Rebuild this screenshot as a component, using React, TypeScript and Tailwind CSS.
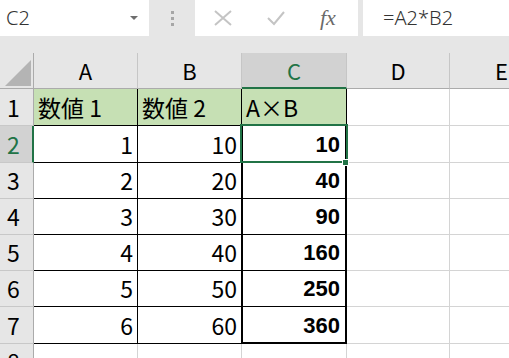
import React from "react";

const cols = [
  { key: "A", w: "w-[104px]" },
  { key: "B", w: "w-[104px]" },
  { key: "C", w: "w-[105px]" },
  { key: "D", w: "w-[103px]" },
  { key: "E", w: "w-[104px]" },
];

const rows = [
  { n: 1, h: "h-[37px]", a: "数値 1", b: "数値 2", c: "A×B" },
  { n: 2, h: "h-[37px]", a: "1", b: "10", c: "10" },
  { n: 3, h: "h-[36px]", a: "2", b: "20", c: "40" },
  { n: 4, h: "h-[36px]", a: "3", b: "30", c: "90" },
  { n: 5, h: "h-[36px]", a: "4", b: "40", c: "160" },
  { n: 6, h: "h-[36px]", a: "5", b: "50", c: "250" },
  { n: 7, h: "h-[37px]", a: "6", b: "60", c: "360" },
  { n: 8, h: "h-[36px]" },
];

const FormulaBar = () => (
  <div className="flex h-[36px]">
    <div className="w-[149px] bg-white flex items-center pl-[6px] pr-[11px]">
      <span className="font-['Noto_Sans',sans-serif] font-light text-[20px] text-[#333] leading-none">C2</span>
      <span className="ml-auto w-0 h-0 border-l-[4px] border-r-[4px] border-t-[4px] border-l-transparent border-r-transparent border-t-[#6e6e6e]" />
    </div>
    <div className="w-[46px] flex flex-col items-center justify-center gap-[3px]">
      <span className="w-[3px] h-[3px] bg-[#a6a6a6]" />
      <span className="w-[3px] h-[3px] bg-[#a6a6a6]" />
      <span className="w-[3px] h-[3px] bg-[#a6a6a6]" />
    </div>
    <div className="w-[163px] bg-white flex items-center">
      <svg className="ml-[17px]" width="22" height="16" viewBox="0 0 22 16">
        <path d="M3 1 L19 15 M19 1 L3 15" stroke="#c4c4c4" strokeWidth="2" fill="none" />
      </svg>
      <svg className="ml-[32px]" width="20" height="16" viewBox="0 0 20 16">
        <path d="M2 8 L8 14 L18 2" stroke="#c4c4c4" strokeWidth="2" fill="none" />
      </svg>
      <span className="ml-[34px] font-['Liberation_Serif',serif] italic text-[22px] text-[#6a6a6a] leading-none">fx</span>
    </div>
    <div className="w-[5px]" />
    <div className="flex-1 bg-white flex items-center pl-[20px]">
      <span className="font-['Noto_Sans',sans-serif] font-light text-[20px] text-[#333] leading-none">=A2*B2</span>
    </div>
  </div>
);

const HeaderRow = () => (
  <div className="flex h-[36px]">
    <div className="w-[34px] shrink-0 border-r border-b border-r-[#ababab] border-b-[#ababab] flex items-center justify-center">
      <svg width="30" height="30" viewBox="0 0 30 30">
        <polygon points="3,30 29,4 29,30" fill="#b4b4b4" />
      </svg>
    </div>
    {cols.map((c) =>
      c.key === "C" ? (
        <div
          key={c.key}
          className={`${c.w} shrink-0 bg-[#d2d2d2] border-r border-r-[#c6c6c6] border-b-2 border-b-[#217346] flex items-center justify-center text-[22px] text-[#217346]`}
        >
          {c.key}
        </div>
      ) : (
        <div
          key={c.key}
          className={`${c.w} shrink-0 border-r border-b border-r-[#c6c6c6] border-b-[#ababab] flex items-center justify-center text-[22px] text-black`}
        >
          {c.key}
        </div>
      )
    )}
  </div>
);

export default function App() {
  return (
    <div className="w-[509px] h-[358px] overflow-hidden bg-[#e6e6e6] font-['Noto_Sans_CJK_JP',sans-serif]">
      <FormulaBar />
      <div className="h-[17px]" />
      <HeaderRow />
      <div className="relative">
        {rows.map((r) => {
          const inTable = r.n <= 7;
          const head = r.n === 1;
          const border = inTable ? "border-r border-b border-black" : "border-r border-b border-[#d4d4d4]";
          return (
            <div key={r.n} className={`flex ${r.h}`}>
              <div
                className={
                  r.n === 2
                    ? "w-[34px] shrink-0 bg-[#d2d2d2] border-r-2 border-b border-r-[#217346] border-b-[#c8c8c8] flex items-center pl-[7px] text-[23px] text-[#217346]"
                    : "w-[34px] shrink-0 border-r border-b border-r-[#ababab] border-b-[#c8c8c8] flex items-center pl-[7px] text-[23px] text-black"
                }
              >
                {r.n}
              </div>
              <div
                className={`w-[104px] shrink-0 flex items-center text-[23px] text-black ${border} ${
                  head ? "bg-[#c6e0b4] justify-start pl-[4px]" : inTable ? "bg-white justify-end pr-[4px]" : "bg-white"
                }`}
              >
                {r.a}
              </div>
              <div
                className={`w-[104px] shrink-0 flex items-center text-[23px] text-black ${border} ${
                  head ? "bg-[#c6e0b4] justify-start pl-[4px]" : inTable ? "bg-white justify-end pr-[4px]" : "bg-white"
                }`}
              >
                {r.b}
              </div>
              <div
                className={`w-[105px] shrink-0 flex items-center text-black ${border} ${
                  head
                    ? "bg-[#c6e0b4] justify-start pl-[4px] text-[23px]"
                    : "bg-white justify-end pr-[6px] font-['Liberation_Sans',sans-serif] text-[22px] font-bold"
                }`}
              >
                {r.c}
              </div>
              <div className="w-[103px] shrink-0 bg-white border-r border-b border-[#d4d4d4]" />
              <div className="w-[104px] shrink-0 bg-white border-r border-b border-[#d4d4d4]" />
            </div>
          );
        })}
        {/* thick outline around C2:C7 */}
        <div className="absolute left-[241px] top-[35px] w-[106px] h-[220px] border-2 border-black pointer-events-none" />
        {/* active cell */}
        <div className="absolute left-[240px] top-[35px] w-[108px] h-[39px] border-2 border-[#217346] pointer-events-none" />
        <div className="absolute left-[342px] top-[70px] w-[7px] h-[7px] bg-[#217346] border border-white pointer-events-none" />
      </div>
    </div>
  );
}
